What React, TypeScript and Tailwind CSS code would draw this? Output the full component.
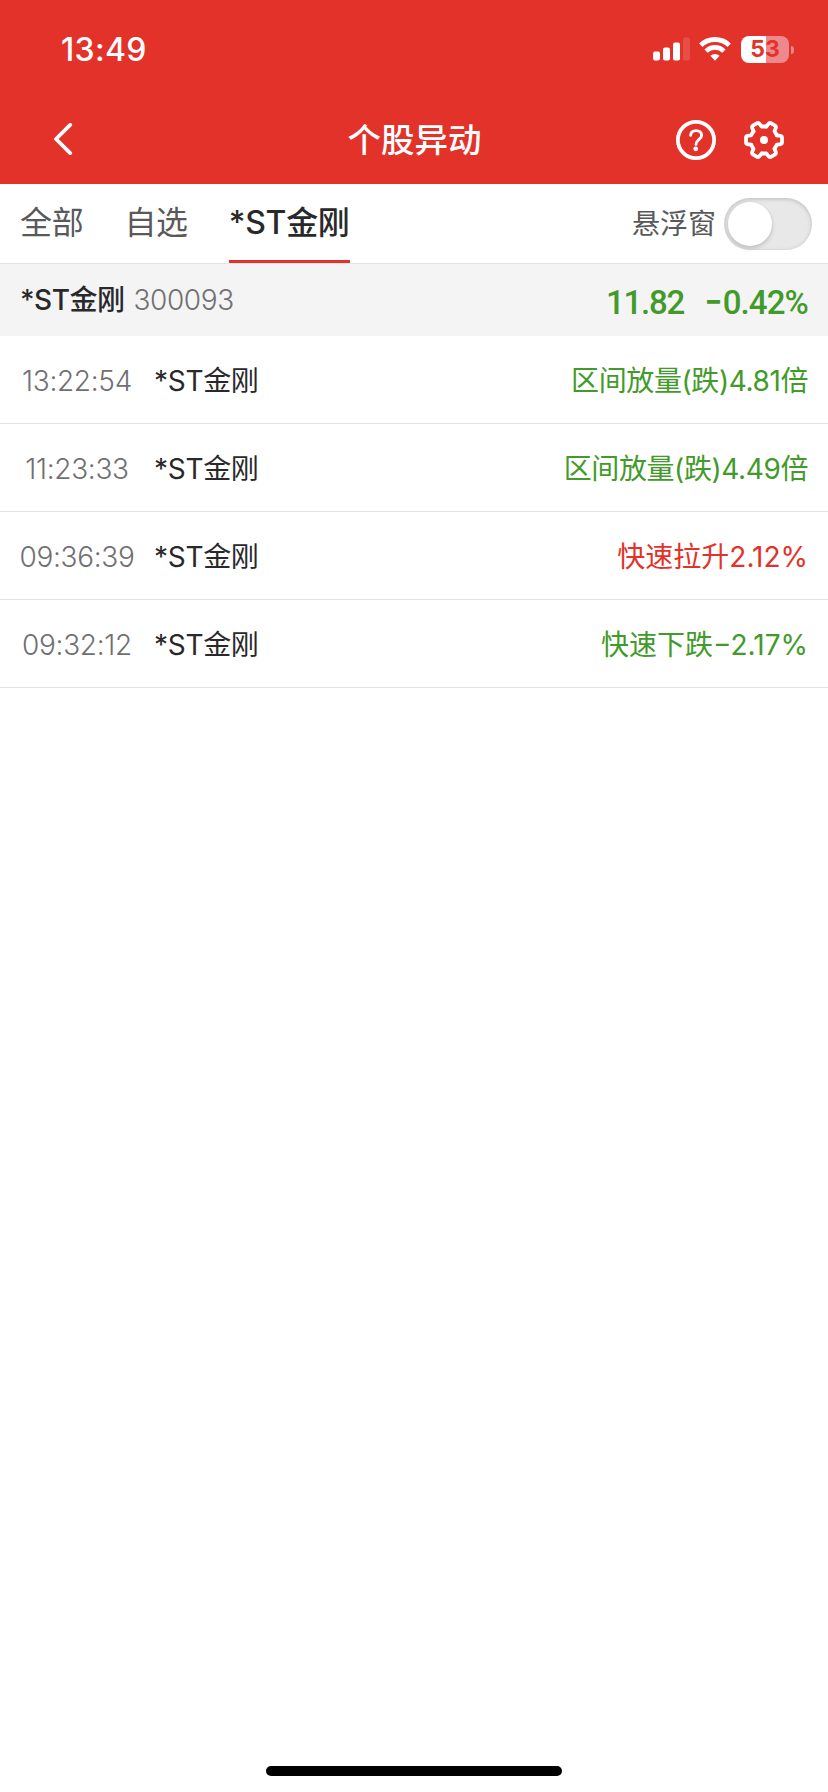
import React, { useState } from "react";

// Define the shape of a single stock movement record
interface Movement {
  time: string;
  name: string;
  event: string;
  trend: "up" | "down";
}

const movements: Movement[] = [
  { time: "13:22:54", name: "*ST金刚", event: "区间放量(跌)4.81倍", trend: "down" },
  { time: "11:23:33", name: "*ST金刚", event: "区间放量(跌)4.49倍", trend: "down" },
  { time: "09:36:39", name: "*ST金刚", event: "快速拉升2.12%", trend: "up" },
  { time: "09:32:12", name: "*ST金刚", event: "快速下跌−2.17%", trend: "down" },
];

const tabs = ["全部", "自选", "*ST金刚"];

const SignalIcon = () => (
  <svg width="38" height="24" viewBox="0 0 38 24" fill="white">
    <rect x="0" y="14.5" width="7" height="9" rx="2" />
    <rect x="10" y="10.5" width="7" height="13" rx="2" />
    <rect x="20" y="5.5" width="7" height="18" rx="2" />
    <rect x="30" y="0.5" width="7" height="23" rx="2" opacity="0.14" />
  </svg>
);

const WifiIcon = () => (
  <svg width="32" height="24" viewBox="0 0 32 24" fill="none" stroke="white">
    <path d="M1.8 8.2A20.5 20.5 0 0 1 30.2 8.2" strokeWidth="4.8" />
    <path d="M7.1 14.1A12.6 12.6 0 0 1 24.9 14.1" strokeWidth="4.6" />
    <path d="M11.4 18.8A7 7 0 0 1 20.6 18.8L16 23.8Z" fill="white" stroke="none" />
  </svg>
);

const HelpIcon = () => (
  <svg width="40" height="40" viewBox="-20 -20 40 40" fill="none" stroke="white">
    <circle r="18.1" strokeWidth="3.8" />
    <path
      d="M-5.4 -4.6C-5.2 -7.6 -3 -9.4 0.1 -9.4C3.3 -9.4 5.6 -7.4 5.6 -4.6C5.6 -0.8 0 -0.4 0 4.4"
      strokeWidth="2.9"
      strokeLinecap="round"
    />
    <circle cx="-0.3" cy="8.8" r="2.4" fill="white" stroke="none" />
  </svg>
);

// Gear made of one tooth repeated every 60 degrees
const GearIcon = () => (
  <svg width="40" height="40" viewBox="-20 -20 40 40" fill="none" stroke="white">
    {[0, 60, 120, 180, 240, 300].map((angle) => (
      <path
        key={angle}
        d="M12.9 -4.7L15.6 -4.3Q18 -4 18 -2.4V2.4Q18 4 15.6 4.3L12.9 4.7L10.5 8.8"
        transform={`rotate(${angle})`}
        strokeWidth="3.8"
        strokeLinecap="round"
        strokeLinejoin="round"
      />
    ))}
    <circle r="4" fill="white" stroke="none" />
  </svg>
);

const StatusBar = () => (
  <div className="flex h-24 items-start justify-between pr-[34px] pl-[61px] text-white">
    <span className="mt-[30px] text-[32px] leading-10 font-medium tracking-[0.3px]">
      13:49
    </span>
    <div className="mt-9 flex items-start">
      <div className="mt-[1px]">
        <SignalIcon />
      </div>
      <div className="mt-[1px] ml-2">
        <WifiIcon />
      </div>
      {/* Battery level */}
      <div className="ml-[10px] flex items-center gap-[2px]">
        <div className="flex h-[27px] w-12 items-center justify-center rounded-lg bg-linear-to-r from-white from-52% to-[#ed898c] to-52% text-[23px] leading-none font-bold text-[#e33229]">
          53
        </div>
        <div className="h-2 w-[3px] rounded-r-full bg-[#ed898c]" />
      </div>
    </div>
  </div>
);

const Header = () => (
  <header className="h-46 bg-[#e33229]">
    <StatusBar />
    <div className="grid h-[88px] grid-cols-3 items-center pr-11 pl-[53px] text-white">
      <button className="mb-[2px] w-5 cursor-pointer">
        <svg width="20" height="32" viewBox="0 0 20 32" fill="none" stroke="white">
          <path
            d="M17.2 1.9L3 16L17.2 30.1"
            strokeWidth="3.8"
            strokeLinecap="round"
            strokeLinejoin="round"
          />
        </svg>
      </button>
      <h1 className="-ml-[8px] text-center text-[33.5px] leading-10 font-medium whitespace-nowrap">
        个股异动
      </h1>
      <div className="flex justify-end gap-7">
        <HelpIcon />
        <GearIcon />
      </div>
    </div>
  </header>
);

const MovementRow: React.FC<{ movement: Movement }> = ({ movement }) => {
  const { time, name, event, trend } = movement;

  return (
    <li className="flex h-22 items-center border-b border-[#e3e3e5] pt-[2px] pr-5 pl-[17px] text-[28px] leading-10">
      <span className="w-30 text-center font-light tracking-[-0.3px] text-[#707073]">
        {time}
      </span>
      <span className="ml-[17px] tracking-[-0.3px] text-[#29292b]">{name}</span>
      <span
        className={`ml-auto ${trend === "up" ? "text-[#e33229]" : "text-[#429a2a]"} ${
          event.includes("(") ? "tracking-[-0.4px]" : ""
        }`}
      >
        {event}
      </span>
    </li>
  );
};

const App: React.FC = () => {
  const [activeTab, setActiveTab] = useState(2);
  const [floating, setFloating] = useState(false);

  return (
    <div className="flex h-[1792px] w-[828px] flex-col bg-white font-['Inter','Noto_Sans_CJK_SC',sans-serif]">
      <Header />

      {/* Tabs and floating window switch */}
      <nav className="flex h-20 justify-between border-b border-[#e3e3e5] pr-4 pl-5">
        <div className="flex gap-[41px]">
          {tabs.map((tab, index) => (
            <button
              key={tab}
              onClick={() => setActiveTab(index)}
              className={`cursor-pointer border-b-3 pt-[2px] text-[32px] leading-10 tracking-[-0.3px] whitespace-nowrap ${
                activeTab === index
                  ? "border-[#e33229] font-medium text-[#29292b]"
                  : "border-transparent text-[#59595b]"
              }`}
            >
              {tab}
            </button>
          ))}
        </div>
        <div className="flex items-center gap-2 pt-[1px]">
          <span className="text-[28px] leading-10 text-[#59595b]">悬浮窗</span>
          <button
            onClick={() => setFloating(!floating)}
            className={`flex h-[52px] w-22 cursor-pointer items-center rounded-full p-1 shadow-[inset_0_1px_4px_rgba(0,0,0,0.2)] ${
              floating ? "justify-end bg-[#e33229]" : "bg-[#e8e8e8]"
            }`}
          >
            <span className="size-11 rounded-full bg-white shadow-[0_2px_4px_rgba(0,0,0,0.2)]" />
          </button>
        </div>
      </nav>

      {/* Current quote */}
      <section className="flex h-18 items-center bg-[#f4f4f4] pr-5 pl-5 text-[28px] leading-10">
        <span className="font-medium tracking-[-0.5px] text-[#29292b]">*ST金刚</span>
        <span className="ml-[9px] font-light tracking-[-0.4px] text-[#707073]">300093</span>
        <div className="mt-[3px] ml-auto flex items-baseline gap-[20px] font-['Roboto',sans-serif] text-[33px] font-medium tracking-[-1.2px] text-[#429a2a]">
          <span>11.82</span>
          <span className="tracking-[-0.9px]">
            <span className="mr-[1px] font-['Inter',sans-serif] text-[40px] leading-none">
              -
            </span>
            0.42%
          </span>
        </div>
      </section>

      <ul>
        {movements.map((movement) => (
          <MovementRow key={movement.time} movement={movement} />
        ))}
      </ul>

      {/* Home indicator */}
      <div className="mx-auto mt-auto mb-4 h-[10px] w-74 rounded-full bg-black" />
    </div>
  );
};

export default App;
